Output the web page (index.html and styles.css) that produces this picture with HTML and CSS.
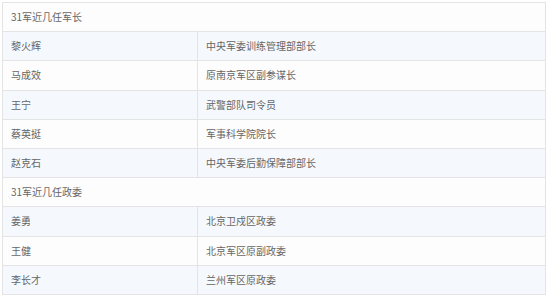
FILE: index.html
```html
<!DOCTYPE html>
<html lang="zh">
<head>
<meta charset="utf-8">
<link rel="stylesheet" href="styles.css">
</head>
<body>
<table class="roster">
  <tr class="head"><td colspan="2">31军近几任军长</td></tr>
  <tr class="alt"><td class="name">黎火辉</td><td>中央军委训练管理部部长</td></tr>
  <tr><td class="name">马成效</td><td>原南京军区副参谋长</td></tr>
  <tr class="alt"><td class="name">王宁</td><td>武警部队司令员</td></tr>
  <tr><td class="name">蔡英挺</td><td>军事科学院院长</td></tr>
  <tr class="alt"><td class="name">赵克石</td><td>中央军委后勤保障部部长</td></tr>
  <tr class="head"><td colspan="2">31军近几任政委</td></tr>
  <tr class="alt"><td class="name">姜勇</td><td>北京卫戍区政委</td></tr>
  <tr><td class="name">王健</td><td>北京军区原副政委</td></tr>
  <tr class="alt"><td class="name">李长才</td><td>兰州军区原政委</td></tr>
</table>
</body>
</html>
```
FILE: styles.css
```css
html, body {
  margin: 0;
  padding: 0;
  background: #ffffff;
}
body {
  padding: 2px 0 0 2px;
  font-family: "Noto Sans CJK SC", "Microsoft YaHei", sans-serif;
  font-size: 10px;
  color: #666666;
}
.roster {
  border-collapse: collapse;
  width: 544px;
}
.roster td {
  border: 1px solid #e4e4e4;
  height: 29.2px;
  padding: 0 0 0 8px;
  box-sizing: border-box;
  vertical-align: middle;
  line-height: 12px;
  background: #fdfdfd;
}
.roster .name {
  width: 195px;
}
.roster tr.alt td {
  background: #f5f9fd;
}
```
